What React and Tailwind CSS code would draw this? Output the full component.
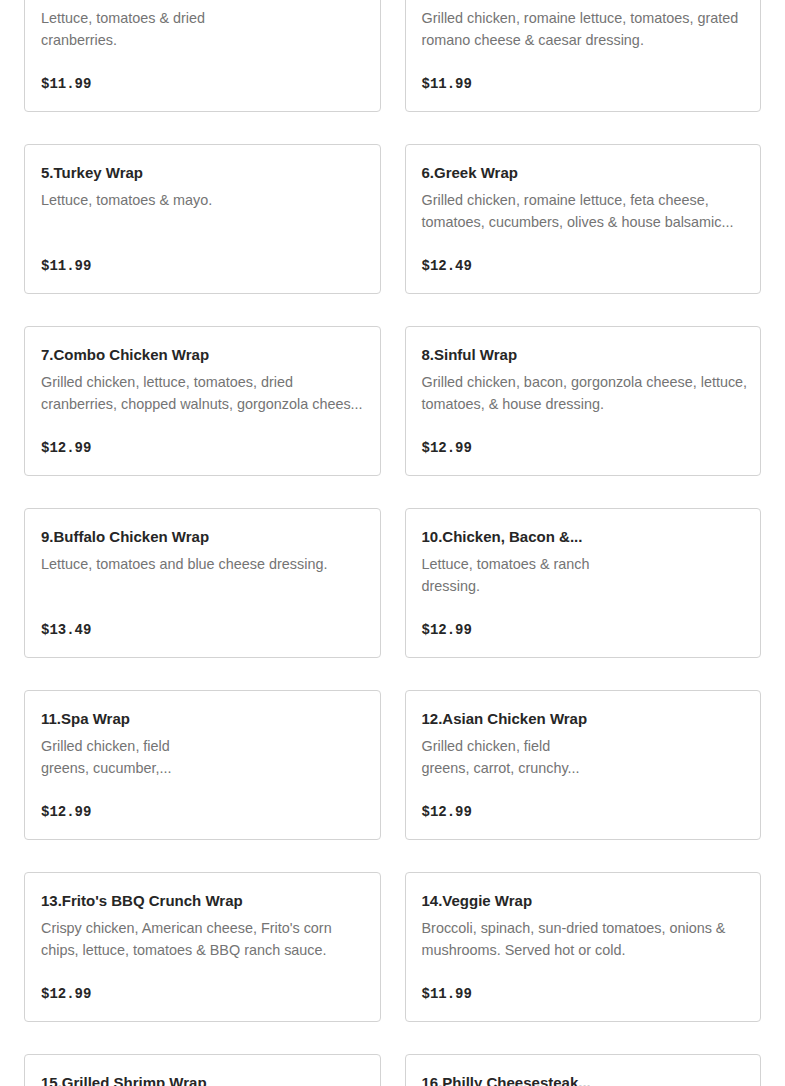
import React from "react";

const items = [
  { title: "3.Cranberry Chicken Wrap", lines: ["Lettuce, tomatoes & dried", "cranberries."], price: "$11.99" },
  { title: "4.Chicken Caesar Wrap", lines: ["Grilled chicken, romaine lettuce, tomatoes, grated", "romano cheese & caesar dressing."], price: "$11.99" },
  { title: "5.Turkey Wrap", lines: ["Lettuce, tomatoes & mayo."], price: "$11.99" },
  { title: "6.Greek Wrap", lines: ["Grilled chicken, romaine lettuce, feta cheese,", "tomatoes, cucumbers, olives & house balsamic..."], price: "$12.49" },
  { title: "7.Combo Chicken Wrap", lines: ["Grilled chicken, lettuce, tomatoes, dried", "cranberries, chopped walnuts, gorgonzola chees..."], price: "$12.99" },
  { title: "8.Sinful Wrap", lines: ["Grilled chicken, bacon, gorgonzola cheese, lettuce,", "tomatoes, & house dressing."], price: "$12.99" },
  { title: "9.Buffalo Chicken Wrap", lines: ["Lettuce, tomatoes and blue cheese dressing."], price: "$13.49" },
  { title: "10.Chicken, Bacon &...", lines: ["Lettuce, tomatoes & ranch", "dressing."], price: "$12.99" },
  { title: "11.Spa Wrap", lines: ["Grilled chicken, field", "greens, cucumber,..."], price: "$12.99" },
  { title: "12.Asian Chicken Wrap", lines: ["Grilled chicken, field", "greens, carrot, crunchy..."], price: "$12.99" },
  { title: "13.Frito's BBQ Crunch Wrap", lines: ["Crispy chicken, American cheese, Frito's corn", "chips, lettuce, tomatoes & BBQ ranch sauce."], price: "$12.99" },
  { title: "14.Veggie Wrap", lines: ["Broccoli, spinach, sun-dried tomatoes, onions &", "mushrooms. Served hot or cold."], price: "$11.99" },
  { title: "15.Grilled Shrimp Wrap", lines: ["Grilled shrimp, lettuce, tomatoes", "& house dressing."], price: "$13.99" },
  { title: "16.Philly Cheesesteak...", lines: ["Steak, peppers, onions &", "american cheese."], price: "$13.49" },
];

function Card({ item }) {
  return (
    <div className="flex flex-col rounded-[4px] border border-[#d3d3d3] bg-white px-4 pb-4 pt-4">
      <div className="h-6 whitespace-nowrap text-[15px] font-bold leading-6 text-[#262626]" style={{ fontFamily: '"Liberation Sans", Arial, sans-serif' }}>
        {item.title}
      </div>
      <div className="mt-1 h-[44px] text-[14.4px] leading-[22px] text-[#747474]" style={{ fontFamily: '"Liberation Sans", Arial, sans-serif' }}>
        {item.lines.map((l, i) => (
          <div key={i} className="whitespace-nowrap">{l}</div>
        ))}
      </div>
      <div className="mt-[22px] text-[14px] font-bold leading-[22px] text-[#262626]" style={{ fontFamily: '"Liberation Mono", "Courier New", monospace' }}>
        {item.price}
      </div>
    </div>
  );
}

export default function App() {
  return (
    <div className="h-[1086px] w-full overflow-hidden bg-white">
      <div className="-mt-[38px] grid grid-cols-2 gap-x-6 gap-y-8 px-6">
        {items.map((it, i) => (
          <Card key={i} item={it} />
        ))}
      </div>
    </div>
  );
}
